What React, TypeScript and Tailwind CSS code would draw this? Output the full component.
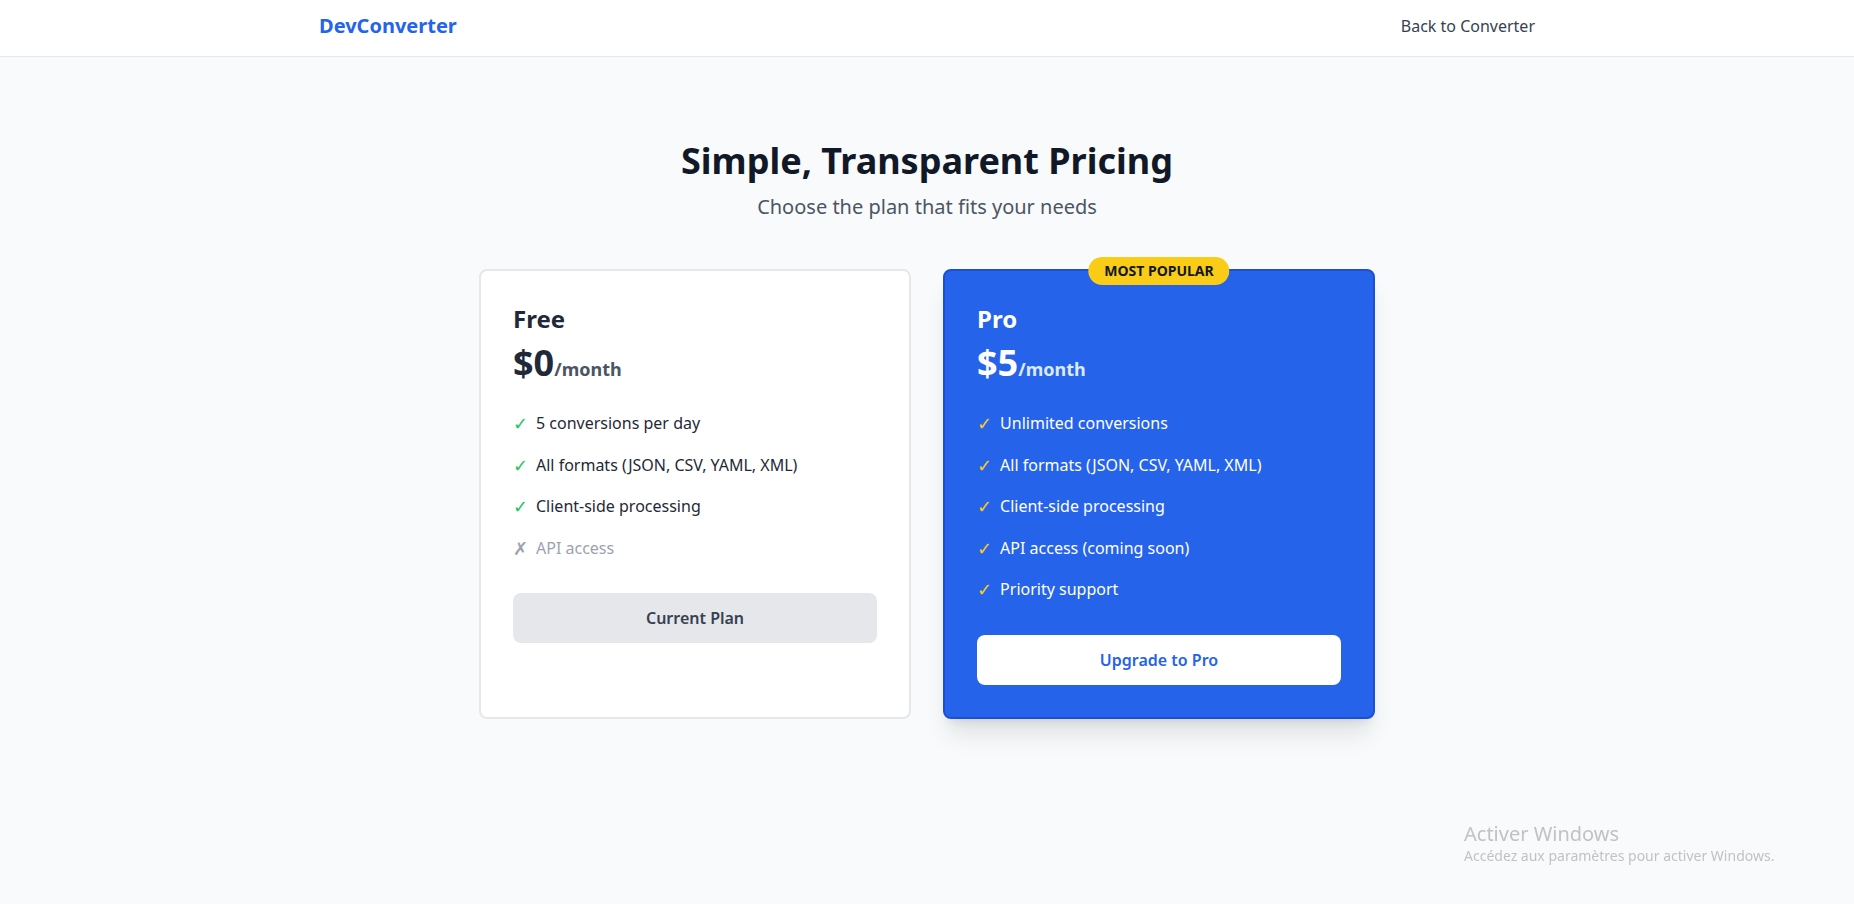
import React from "react";

type Feature = { text: string; included: boolean };

const freeFeatures: Feature[] = [
  { text: "5 conversions per day", included: true },
  { text: "All formats (JSON, CSV, YAML, XML)", included: true },
  { text: "Client-side processing", included: true },
  { text: "API access", included: false },
];

const proFeatures: Feature[] = [
  { text: "Unlimited conversions", included: true },
  { text: "All formats (JSON, CSV, YAML, XML)", included: true },
  { text: "Client-side processing", included: true },
  { text: "API access (coming soon)", included: true },
  { text: "Priority support", included: true },
];

const font = { fontFamily: '"Noto Sans", "Open Sans", sans-serif' };

const App: React.FC = () => {
  return (
    <div className="min-h-screen bg-[#f9fafb] relative" style={font}>
      {/* Header */}
      <header className="bg-white border-b border-[#e5e7eb]">
        <div className="max-w-7xl mx-auto px-8 h-14 pb-1 flex items-center justify-between">
          <span className="text-xl font-bold text-[#2563eb]">DevConverter</span>
          <a href="#" className="text-base text-[#374151]">
            Back to Converter
          </a>
        </div>
      </header>

      {/* Pricing */}
      <main className="pt-[84px] px-8">
        <h1 className="text-4xl font-bold text-[#111827] text-center mb-3">
          Simple, Transparent Pricing
        </h1>
        <p className="text-xl text-[#4b5563] text-center mb-12">
          Choose the plan that fits your needs
        </p>

        <div className="grid grid-cols-2 gap-8 max-w-4xl mx-auto">
          {/* Free */}
          <div className="bg-white border-2 border-[#e5e7eb] rounded-lg p-8 flex flex-col">
            <h3 className="text-2xl font-bold text-[#1f2937] mb-2">Free</h3>
            <div className="text-4xl font-bold text-[#1f2937] mb-7">
              $0<span className="text-lg text-[#4b5563]">/month</span>
            </div>
            <ul className="space-y-4 mb-8">
              {freeFeatures.map((f) => (
                <li
                  key={f.text}
                  className={`flex items-center text-base leading-[25.5px] ${
                    f.included ? "text-[#1f2937]" : "text-[#9ca3af]"
                  }`}
                >
                  <span
                    className={`mr-2 text-lg leading-[25.5px] ${
                      f.included ? "text-[#22c55e]" : "text-[#9ca3af]"
                    }`}
                    style={{ fontFamily: '"DejaVu Sans", sans-serif', fontWeight: 300 }}
                  >
                    {f.included ? "✓" : "✗"}
                  </span>
                  {f.text}
                </li>
              ))}
            </ul>
            <button className="w-full py-3 leading-[26px] rounded-lg bg-[#e5e7eb] text-[#374151] font-semibold">
              Current Plan
            </button>
          </div>

          {/* Pro */}
          <div className="relative bg-[#2563eb] border-2 border-[#1d4ed8] rounded-lg p-8 shadow-xl flex flex-col">
            <div className="absolute top-0 left-1/2 -translate-x-1/2 -translate-y-1/2 bg-[#facc15] text-[#111827] text-sm font-bold px-4 py-1 rounded-full">
              MOST POPULAR
            </div>
            <h3 className="text-2xl font-bold text-white mb-2">Pro</h3>
            <div className="text-4xl font-bold text-white mb-7">
              $5<span className="text-lg text-[#dbeafe]">/month</span>
            </div>
            <ul className="space-y-4 mb-8">
              {proFeatures.map((f) => (
                <li
                  key={f.text}
                  className="flex items-center text-base leading-[25.5px] text-white"
                >
                  <span
                    className="mr-2 text-lg leading-[25.5px] text-[#facc15]"
                    style={{ fontFamily: '"DejaVu Sans", sans-serif' }}
                  >
                    ✓
                  </span>
                  {f.text}
                </li>
              ))}
            </ul>
            <button className="w-full py-3 leading-[26px] rounded-lg bg-white text-[#2563eb] font-semibold">
              Upgrade to Pro
            </button>
          </div>
        </div>
      </main>

      {/* OS activation watermark */}
      <div className="fixed left-[1464px] top-[821px] text-[#c2c2c2] pointer-events-none">
        <div className="text-xl leading-[26px]">Activer Windows</div>
        <div className="text-sm leading-[18px]">
          Accédez aux paramètres pour activer Windows.
        </div>
      </div>
    </div>
  );
};

export default App;
